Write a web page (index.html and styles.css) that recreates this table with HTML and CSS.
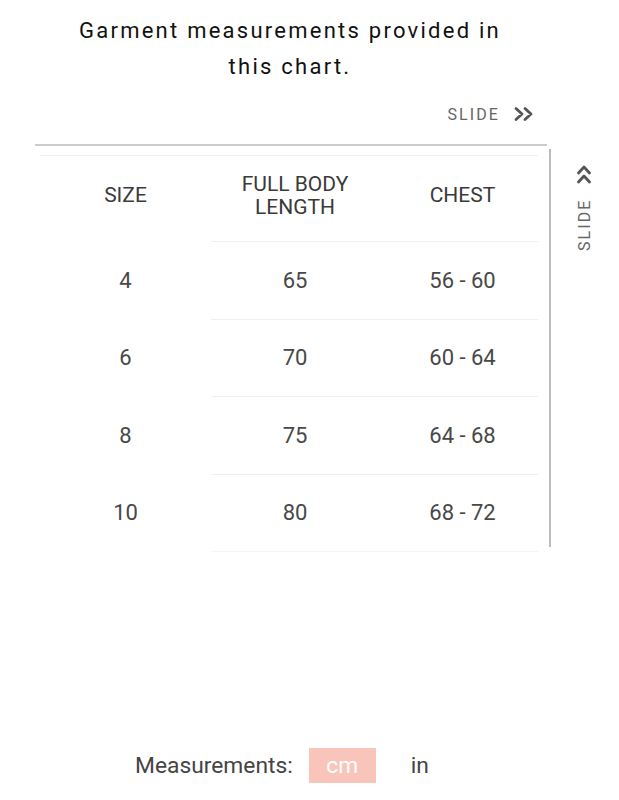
FILE: index.html
```html
<!DOCTYPE html>
<html>
<head>
<meta charset="utf-8">
<link rel="stylesheet" href="styles.css">
</head>
<body>
<div class="page">
  <h1 class="title">Garment measurements provided in this chart.</h1>
  <div class="slide-row">
    <span class="slide">SLIDE
      <svg class="chev" width="20" height="16" viewBox="0 0 20 16"><path d="M2 2.5 L8 8 L2 13.5 M11 2.5 L17 8 L11 13.5" fill="none" stroke="#555" stroke-width="2.8" stroke-linecap="round" stroke-linejoin="round"/></svg>
    </span>
  </div>
  <div class="chart-row">
    <div class="chart">
      <table class="sizes">
        <thead>
          <tr><th class="c1">SIZE</th><th class="c2">FULL BODY<br>LENGTH</th><th class="c3">CHEST</th></tr>
        </thead>
        <tbody>
          <tr><td class="c1">4</td><td class="c2">65</td><td class="c3">56 - 60</td></tr>
          <tr><td class="c1">6</td><td class="c2">70</td><td class="c3">60 - 64</td></tr>
          <tr><td class="c1">8</td><td class="c2">75</td><td class="c3">64 - 68</td></tr>
          <tr><td class="c1">10</td><td class="c2">80</td><td class="c3">68 - 72</td></tr>
        </tbody>
      </table>
    </div>
    <div class="rail"></div>
    <div class="vslide">SLIDE
      <svg class="chev" width="20" height="16" viewBox="0 0 20 16"><path d="M2 2.5 L8 8 L2 13.5 M11 2.5 L17 8 L11 13.5" fill="none" stroke="#555" stroke-width="2.8" stroke-linecap="round" stroke-linejoin="round"/></svg>
    </div>
  </div>
  <div class="units">
    <span class="units-label">Measurements:</span>
    <span class="unit active">cm</span>
    <span class="unit">in</span>
  </div>
</div>
</body>
</html>
```

FILE: styles.css
```css
* { box-sizing: border-box; }
html, body { margin: 0; padding: 0; background: #fff; }
body { font-family: Roboto, "Liberation Sans", sans-serif; }
.page { width: 619px; height: 800px; overflow: hidden; }
.title {
  margin: 0 0 0 65px;
  padding-top: 13px;
  width: 450px;
  text-align: center;
  font-size: 22px;
  font-weight: 400;
  line-height: 36px;
  letter-spacing: 2.25px;
  color: #111;
}
.slide-row {
  display: flex;
  justify-content: flex-end;
  padding-right: 85px;
  margin-top: 18px;
  height: 22px;
}
.slide {
  display: flex;
  align-items: center;
  gap: 14px;
  font-size: 16px;
  letter-spacing: 2.1px;
  color: #666;
}
.chart-row {
  display: flex;
  margin-top: 19px;
}
.chart {
  margin-left: 35px;
  width: 512px;
  border-top: 2px solid #ccc;
  padding-top: 9px;
  padding-left: 5px;
}
.sizes {
  border-collapse: collapse;
  width: 498px;
  border-top: 1px solid #f0f0f0;
}
.sizes th, .sizes td {
  text-align: center;
  padding: 0;
  color: #484848;
}
.sizes th {
  height: 86px;
  padding-bottom: 6px;
  font-size: 21px;
  font-weight: 400;
  line-height: 23px;
  color: #3a3a3a;
}
.sizes td {
  height: 77.5px;
  font-size: 22px;
  border-top: 1px solid #efefef;
}
.sizes tbody tr:last-child td { border-bottom: 1px solid #f5f5f5; }
.sizes tbody tr td.c1 { border-top-color: transparent; border-bottom-color: transparent; }
.c1 { width: 171px; }
.c2 { width: 168px; }
.c3 { width: 159px; padding-left: 8px !important; }
.rail {
  margin-top: 5px;
  margin-left: 2px;
  width: 2px;
  height: 398px;
  background: #bbb;
}
.vslide {
  margin-left: 23px;
  margin-top: 17px;
  writing-mode: vertical-rl;
  transform: rotate(180deg);
  display: flex;
  align-items: center;
  gap: 16px;
  font-size: 16px;
  letter-spacing: 2.1px;
  color: #666;
  height: 90px;
}
.vslide .chev { transform: rotate(90deg); }
.units {
  display: flex;
  align-items: center;
  margin-left: 135px;
  margin-top: 196px;
  font-size: 22.8px;
  color: #444;
}
.units-label { margin-right: 16px; }
.unit { height: 35px; line-height: 35px; }
.unit.active {
  width: 67px;
  text-align: center;
  background: #f9c5bb;
  color: #fff;
  margin-right: 35px;
}
```
